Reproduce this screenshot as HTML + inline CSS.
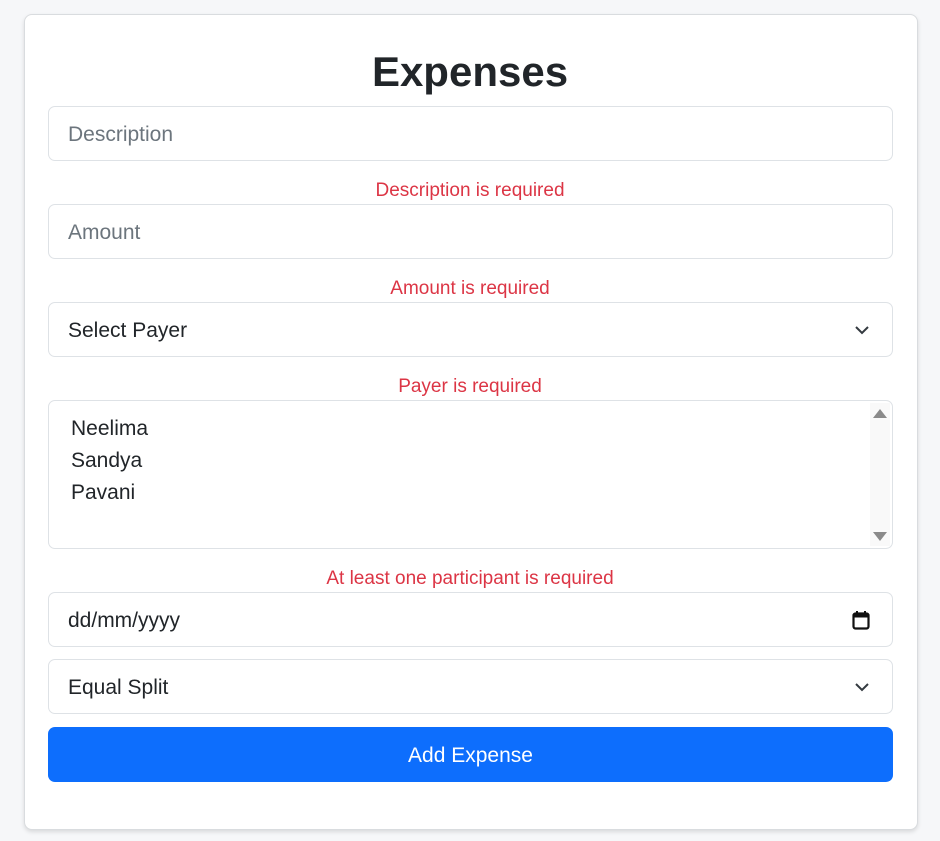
<!DOCTYPE html>
<html><head><style>
body{margin:0;background:#f6f7f9;font-family:"Liberation Sans",sans-serif;width:940px;height:841px;overflow:hidden}
.card{position:absolute;left:24px;top:14px;width:894px;height:816px;background:#fff;border:1px solid #d9dcdf;border-radius:8px;box-shadow:0 2px 4px rgba(0,0,0,.12);box-sizing:border-box}
h1{position:absolute;left:0;right:0;top:42px;margin:0;text-align:center;font-size:42px;font-weight:bold;color:#212529;line-height:60px}
.f{position:absolute;left:48px;width:845px;height:55px;border:1px solid #dee2e6;border-radius:7px;box-sizing:border-box;font-size:21px;color:#212529;padding-left:19px;line-height:55px;background:#fff}
.ph{color:#6c757d}
.err{position:absolute;left:0;width:940px;text-align:center;color:#dc3545;font-size:19px;line-height:24px}
.chev{position:absolute;right:22px;top:21px}
.btn{position:absolute;left:48px;top:727px;width:845px;height:55px;background:#0d6efd;border-radius:7px;color:#fff;text-align:center;line-height:57px;font-size:21px}
</style></head><body>
<div class="card"></div>
<h1>Expenses</h1>
<div class="f ph" style="top:106px">Description</div>
<div class="err" style="top:179px">Description is required</div>
<div class="f ph" style="top:204px">Amount</div>
<div class="err" style="top:277px">Amount is required</div>
<div class="f" style="top:302px">Select Payer<svg class="chev" width="16" height="12" viewBox="0 0 16 12"><path d="M2 3l6 6 6-6" fill="none" stroke="#343a40" stroke-width="2"/></svg></div>
<div class="err" style="top:375px">Payer is required</div>
<div class="f" style="top:400px;height:149px;line-height:32px;padding-top:12px;padding-left:22px">Neelima<br>Sandya<br>Pavani
<div style="position:absolute;right:2px;top:2px;width:20px;height:143px;background:#f9f9f9"></div>
<svg style="position:absolute;right:5px;top:7px" width="14" height="10"><path d="M0 10L7 1L14 10z" fill="#8a8a8a"/></svg>
<svg style="position:absolute;right:5px;top:131px" width="14" height="10"><path d="M0 0L7 9L14 0z" fill="#8a8a8a"/></svg>
</div>
<div class="err" style="top:567px">At least one participant is required</div>
<div class="f" style="top:592px">dd/mm/yyyy<svg style="position:absolute;right:22px;top:17px" width="18" height="20" viewBox="0 0 18 20"><rect x="1.5" y="3.5" width="15" height="15" rx="2" fill="none" stroke="#111" stroke-width="2.2"/><rect x="1.5" y="3.5" width="15" height="4" fill="#111"/><path d="M5 1v4M13 1v4" stroke="#111" stroke-width="2"/></svg></div>
<div class="f" style="top:659px">Equal Split<svg class="chev" width="16" height="12" viewBox="0 0 16 12"><path d="M2 3l6 6 6-6" fill="none" stroke="#343a40" stroke-width="2"/></svg></div>
<div class="btn">Add Expense</div>
</body></html>
